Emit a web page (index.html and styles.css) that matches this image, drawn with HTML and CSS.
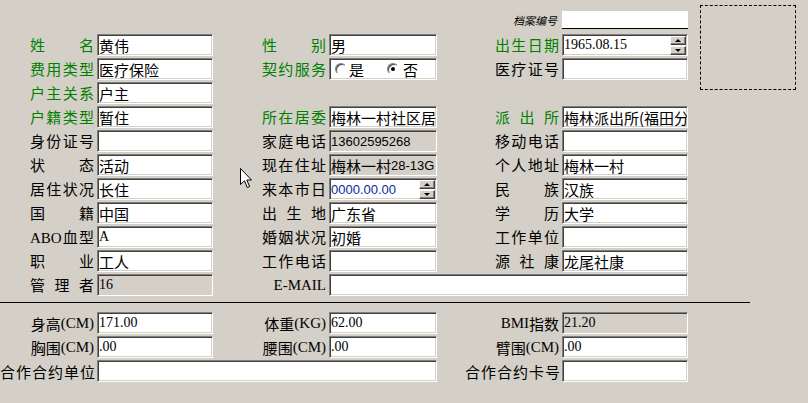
FILE: index.html
```html
<!DOCTYPE html>
<html lang="zh-CN">
<head>
    <meta charset="UTF-8">
    <title>居民档案</title>
    <link rel="stylesheet" href="styles.css">
</head>
<body>
    <div class="page">
        <!-- 基本资料 + 照片框 -->
        <div class="top">
            <div class="main">
                <div class="grid head">
                    <span class="tag">档案编号</span>
                    <div class="box flat"></div>
                </div>

                <div class="grid fields">
                    <span class="lbl g">姓名</span>
                    <div class="box">黄伟</div>
                    <span class="lbl g">性别</span>
                    <div class="box">男</div>
                    <span class="lbl g">出生日期</span>
                    <div class="box">
                        <span class="num">1965.08.15</span>
                        <span class="arrows"><i class="up"></i><i class="dn"></i></span>
                    </div>

                    <span class="lbl g">费用类型</span>
                    <div class="box">医疗保险</div>
                    <span class="lbl g">契约服务</span>
                    <div class="box radios">
                        <span class="radio"></span><span class="opt">是</span>
                        <span class="radio on"></span><span class="opt">否</span>
                    </div>
                    <span class="lbl">医疗证号</span>
                    <div class="box"></div>

                    <span class="lbl g">户主关系</span>
                    <div class="box">户主</div>
                    <span class="skip"></span>

                    <span class="lbl g">户籍类型</span>
                    <div class="box">暂住</div>
                    <span class="lbl g">所在居委</span>
                    <div class="box">梅林一村社区居委会</div>
                    <span class="lbl g">派出所</span>
                    <div class="box">梅林派出所(福田分局)</div>

                    <span class="lbl">身份证号</span>
                    <div class="box"></div>
                    <span class="lbl">家庭电话</span>
                    <div class="box gray"><span class="sans">13602595268</span></div>
                    <span class="lbl">移动电话</span>
                    <div class="box"></div>

                    <span class="lbl">状态</span>
                    <div class="box">活动</div>
                    <span class="lbl">现在住址</span>
                    <div class="box gray">梅林一村<span class="sans">28-13G</span></div>
                    <span class="lbl">个人地址</span>
                    <div class="box">梅林一村</div>

                    <span class="lbl">居住状况</span>
                    <div class="box">长住</div>
                    <span class="lbl">来本市日</span>
                    <div class="box">
                        <span class="sans blue">0000.00.00</span>
                        <span class="arrows"><i class="up"></i><i class="dn"></i></span>
                    </div>
                    <span class="lbl">民族</span>
                    <div class="box">汉族</div>

                    <span class="lbl">国籍</span>
                    <div class="box">中国</div>
                    <span class="lbl">出生地</span>
                    <div class="box">广东省</div>
                    <span class="lbl">学历</span>
                    <div class="box">大学</div>

                    <span class="lbl"><span class="lat">ABO</span>血型</span>
                    <div class="box"><span class="num">A</span></div>
                    <span class="lbl">婚姻状况</span>
                    <div class="box">初婚</div>
                    <span class="lbl">工作单位</span>
                    <div class="box"></div>

                    <span class="lbl">职业</span>
                    <div class="box">工人</div>
                    <span class="lbl">工作电话</span>
                    <div class="box"></div>
                    <span class="lbl">源社康</span>
                    <div class="box">龙尾社康</div>

                    <span class="lbl">管理者</span>
                    <div class="box gray"><span class="num">16</span></div>
                    <span class="rt lat">E-MAIL</span>
                    <div class="box span3"></div>
                </div>
            </div>
            <div class="photo"></div>
        </div>

        <div class="rule"></div>

        <!-- 体检数据 -->
        <div class="grid body">
            <span class="rt">身高<span class="lat">(CM)</span></span>
            <div class="box"><span class="num">171.00</span></div>
            <span class="rt">体重<span class="lat">(KG)</span></span>
            <div class="box"><span class="num">62.00</span></div>
            <span class="rt"><span class="lat">BMI</span>指数</span>
            <div class="box gray"><span class="num">21.20</span></div>

            <span class="rt">胸围<span class="lat">(CM)</span></span>
            <div class="box"><span class="num">.00</span></div>
            <span class="rt">腰围<span class="lat">(CM)</span></span>
            <div class="box"><span class="num">.00</span></div>
            <span class="rt">臂围<span class="lat">(CM)</span></span>
            <div class="box"><span class="num">.00</span></div>

            <span class="rt wide">合作合约单位</span>
            <div class="box span3"></div>
            <span class="rt wide">合作合约卡号</span>
            <div class="box"></div>
        </div>

        <svg class="cursor" width="13" height="21" viewBox="0 0 13 21">
            <path d="M0.5 0.5 L0.5 16.5 L4.5 12.8 L7.3 19.5 L9.6 18.5 L6.8 12 L11.5 12 Z" fill="#fff" stroke="#000" stroke-width="1"/>
        </svg>
    </div>
</body>
</html>
```

FILE: styles.css
```css
/* Fondo gris clásico de Windows */
body {
    margin: 0;
    background-color: #d4d0c8;
    font-family: "Noto Sans CJK SC", sans-serif;
    font-size: 15px;
    color: #000;
}

.page {
    position: relative;
    width: 808px;
    height: 403px;
    overflow: hidden;
}

/* Parte superior: formulario y marco de foto */
.top {
    display: flex;
    align-items: flex-start;
    padding: 5px 0 0 30px;
}

.photo {
    width: 96px;
    height: 85px;
    box-sizing: border-box;
    margin-left: 12px;
    border: 1px dashed #000;
}

/* Rejilla de seis columnas: etiqueta / campo x 3 */
.grid {
    display: grid;
    grid-template-columns: 64px 116px 110px 108px 119px 126px;
    column-gap: 3px;
    row-gap: 2px;
    grid-auto-rows: 22px;
}

.head {
    margin-top: 6px;
    grid-auto-rows: 18px;
}

.head .tag {
    grid-column: 5;
    justify-self: end;
    font-size: 11px;
    font-style: italic;
    line-height: 18px;
    margin-right: 2px;
}

.head .box {
    grid-column: 6;
}

.fields {
    margin-top: 5px;
}

.skip {
    grid-column: span 4;
}

.span3 {
    grid-column: span 3;
}

/* Etiquetas justificadas */
.lbl {
    justify-self: end;
    width: 64px;
    line-height: 22px;
    text-align: justify;
    text-align-last: justify;
}

.g {
    color: #008000;
}

.rt {
    display: flex;
    justify-content: flex-end;
    align-items: center;
    white-space: nowrap;
}

.wide {
    letter-spacing: 1px;
    margin-right: -2px;
}

.lat {
    font-family: "Liberation Serif", serif;
}

/* Campos con borde hundido */
.box {
    display: flex;
    align-items: center;
    height: 22px;
    box-sizing: border-box;
    padding-left: 1px;
    background: #fff;
    border: 1px solid;
    border-color: #808080 #fff #fff #808080;
    box-shadow: inset 1px 1px 0 #404040, inset -1px -1px 0 #d4d0c8;
    overflow: hidden;
    white-space: nowrap;
}

.box.gray {
    background: #d4d0c8;
}

.box.flat {
    height: 18px;
    border: none;
    border-bottom: 1px solid #000;
    box-shadow: none;
}

.num {
    font-family: "Liberation Serif", serif;
    font-size: 14px;
}

.sans {
    font-family: "Liberation Sans", sans-serif;
    font-size: 13px;
}

.blue {
    color: #0a2a9a;
}

/* Flechas del selector de fecha */
.arrows {
    display: flex;
    flex-direction: column;
    flex-shrink: 0;
    gap: 1px;
    margin-left: auto;
    margin-right: 1px;
}

.arrows i {
    position: relative;
    width: 16px;
    height: 9px;
    box-sizing: border-box;
    background: #d4d0c8;
    border: 1px solid;
    border-color: #fff #404040 #404040 #fff;
    box-shadow: inset -1px -1px 0 #808080;
}

.arrows i::after {
    content: "";
    position: absolute;
    left: 4px;
    top: 2px;
    width: 0;
    height: 0;
    border-left: 3px solid transparent;
    border-right: 3px solid transparent;
}

.arrows .up::after {
    border-bottom: 3px solid #000;
}

.arrows .dn::after {
    border-top: 3px solid #000;
}

/* Botones de opción */
.radios {
    padding-left: 5px;
}

.radio {
    position: relative;
    flex-shrink: 0;
    width: 12px;
    height: 12px;
    box-sizing: border-box;
    border-radius: 50%;
    background: #fff;
    border: 1px solid;
    border-color: #808080 #fff #fff #808080;
    box-shadow: inset 1px 1px 0 #404040;
}

.radio.on::after {
    content: "";
    position: absolute;
    left: 3px;
    top: 3px;
    width: 4px;
    height: 4px;
    border-radius: 50%;
    background: #000;
}

.opt {
    flex-shrink: 0;
    margin-left: 2px;
    margin-right: 23px;
}

.radio.on + .opt {
    margin-left: 4px;
}

/* Línea separadora */
.rule {
    width: 750px;
    margin-top: 6px;
    border-top: 1px solid #000;
}

.body {
    margin-top: 9px;
    padding-left: 30px;
}

/* Puntero del ratón */
.cursor {
    position: absolute;
    left: 240px;
    top: 168px;
}
```
